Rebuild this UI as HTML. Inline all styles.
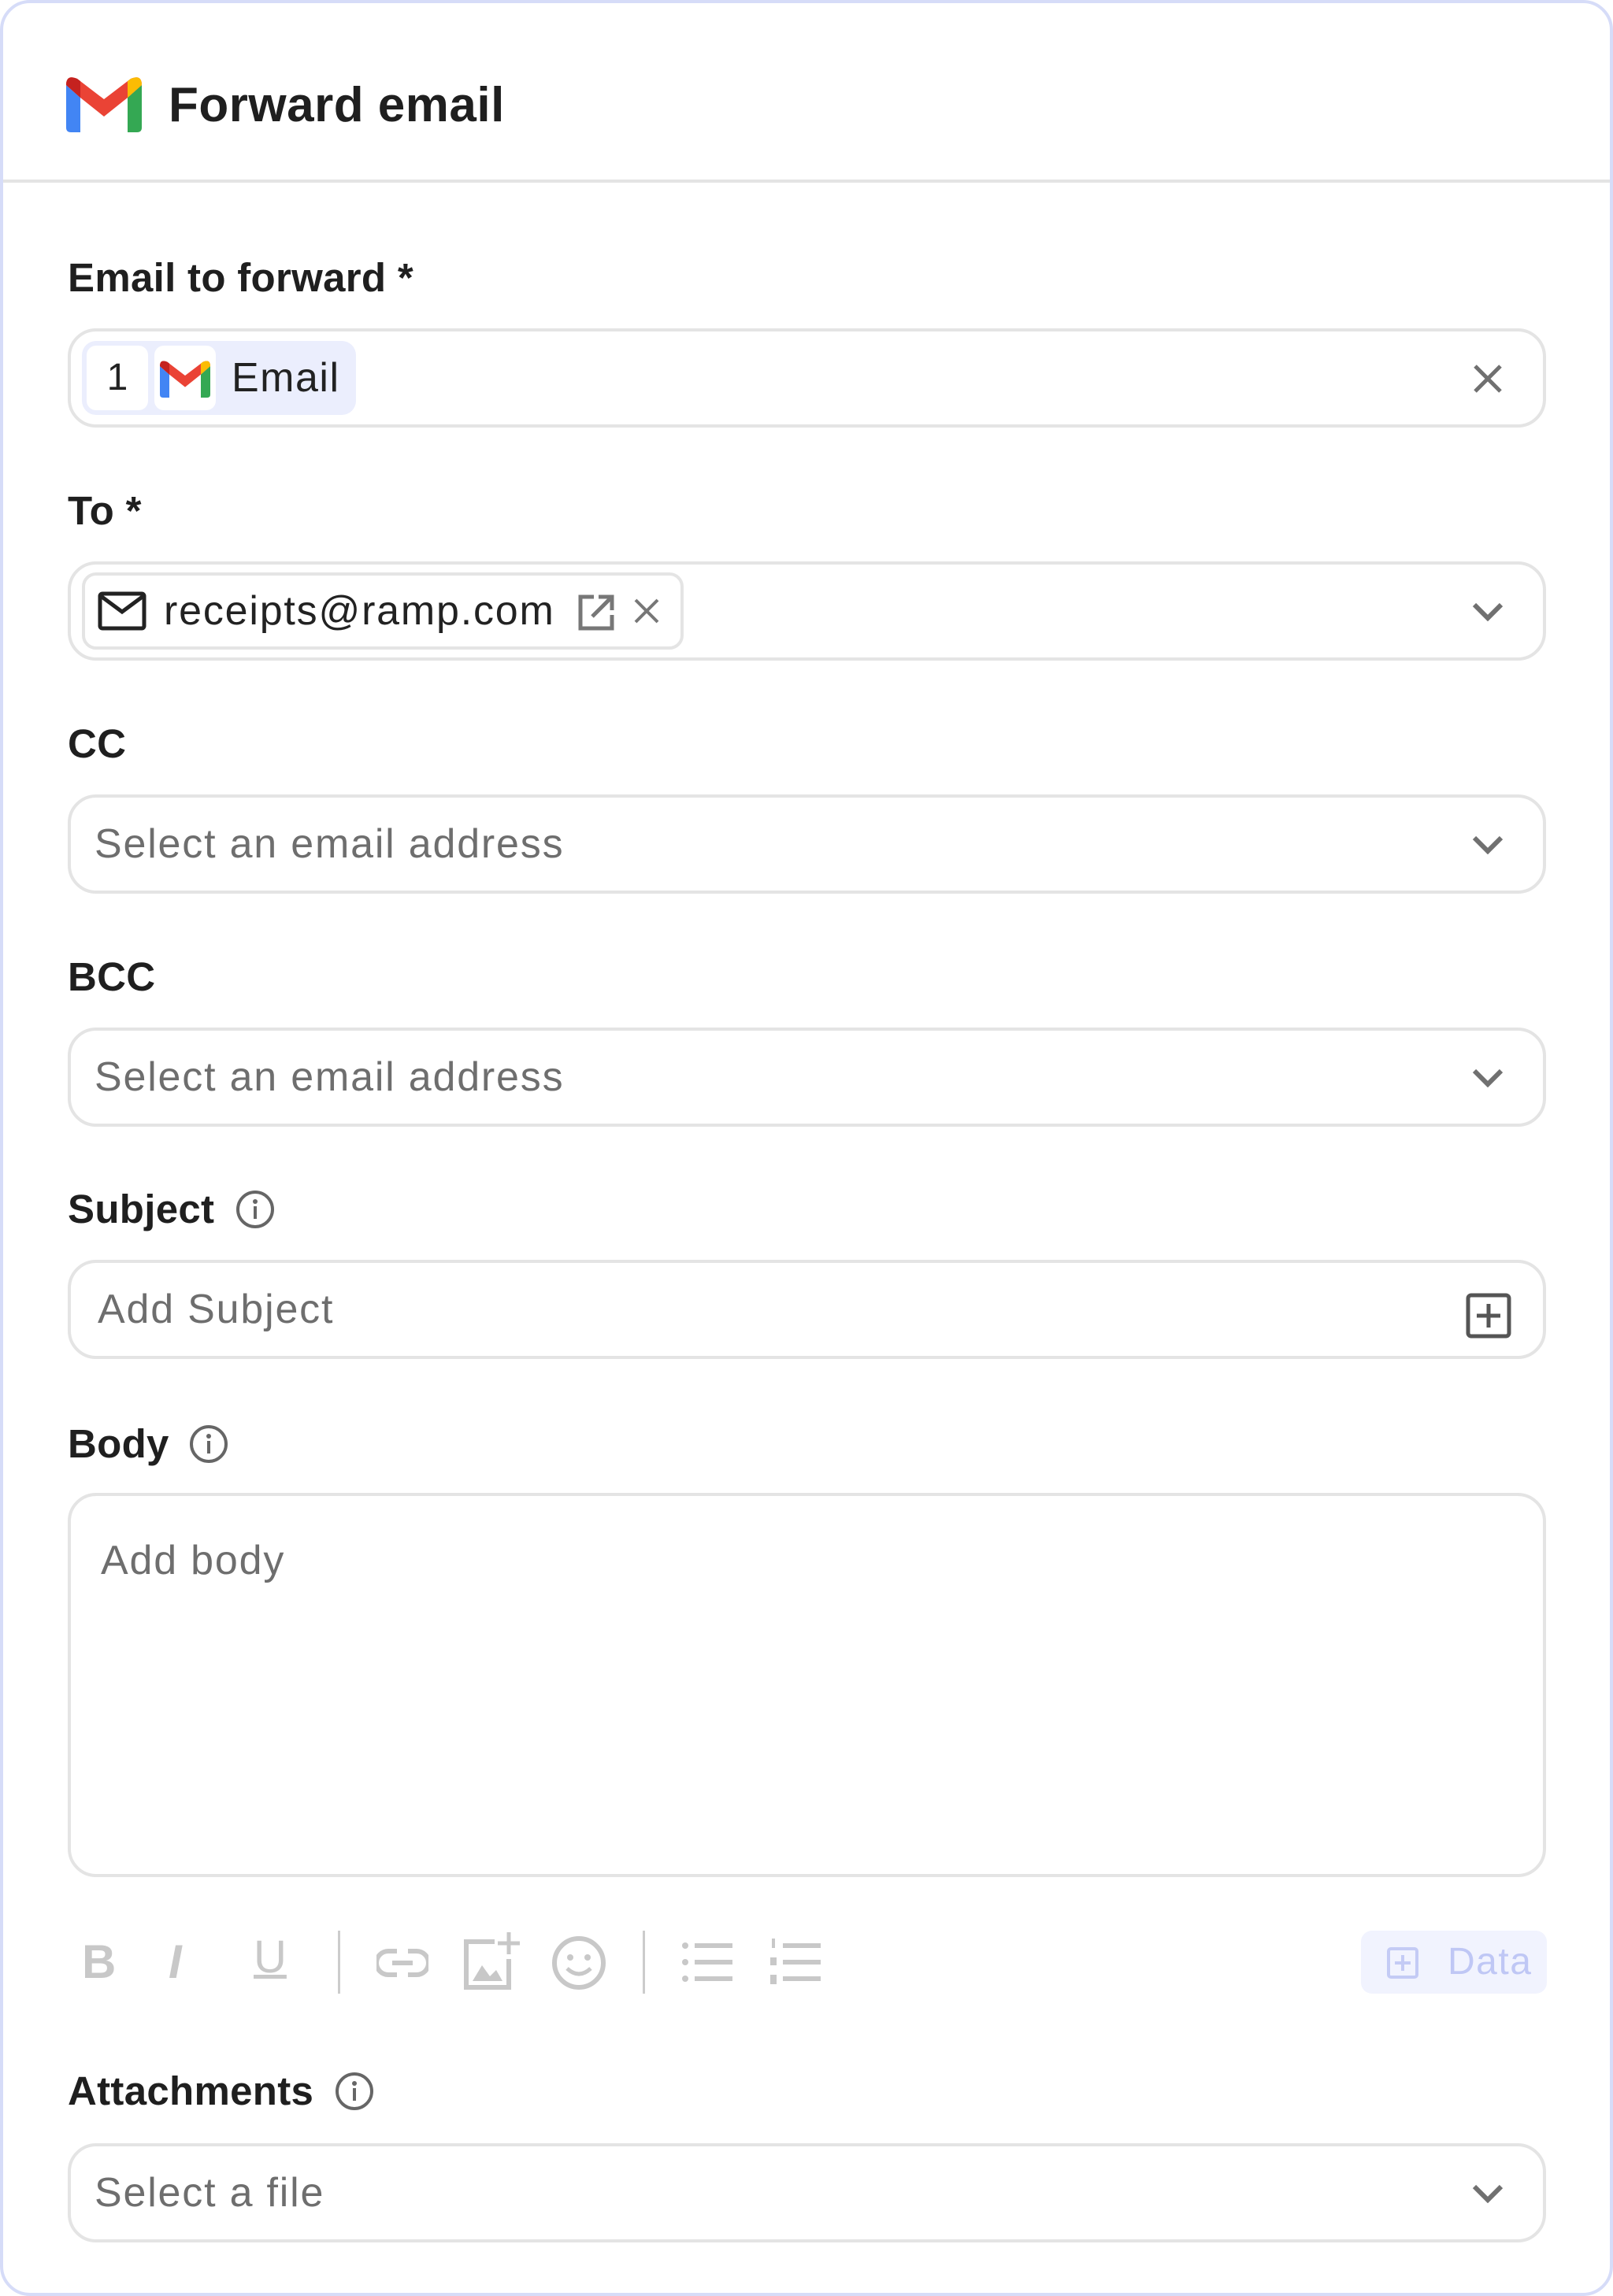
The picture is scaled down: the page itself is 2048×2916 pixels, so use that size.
<!DOCTYPE html>
<html><head><meta charset="utf-8"><style>
*{box-sizing:border-box;margin:0;padding:0}
body{width:2048px;height:2916px;background:#fff;font-family:"Liberation Sans",sans-serif;position:relative;overflow:hidden}
.card{position:absolute;left:0;top:0;width:2048px;height:2916px;border:4px solid #d6dcf8;border-radius:38px}
.hdr{position:absolute;left:4px;right:4px;top:228px;height:4px;background:#e4e4e4}
.title{position:absolute;left:214px;top:98px;font-size:62px;color:#1f1f1f;line-height:72px;font-weight:bold;letter-spacing:0.5px}
.lbl{position:absolute;left:86px;font-size:51px;color:#1f1f1f;line-height:60px;display:flex;align-items:center;font-weight:bold;letter-spacing:0.3px}
.inp{position:absolute;left:86px;width:1877px;height:126px;border:4px solid #e4e4e4;border-radius:36px}
.ph{position:absolute;left:30px;top:0;line-height:118px;font-size:52px;color:#6e6e6e;letter-spacing:1.8px}
.ico{position:absolute;right:50px;top:40px}
</style></head><body>
<div class="card"></div>
<svg style="position:absolute;left:84px;top:96px" width="96" height="72" viewBox="0 0 96 72">
<path d="M0 12 L0 66 Q0 72 6 72 L18 72 L18 28Z" fill="#4285f4"/>
<path d="M78 28 L78 72 L90 72 Q96 72 96 66 L96 12Z" fill="#34a853"/>
<path d="M0 12 Q0 -2 14 4 L48 30 L82 4 Q96 -2 96 12 L78 28 L48 52 L18 28Z" fill="#ea4335"/>
<path d="M0 12 Q0 -2 14 4 L18 7 L18 28Z" fill="#c5221f"/>
<path d="M78 7 L82 4 Q96 -2 96 12 L78 28Z" fill="#fbbc04"/>
</svg>
<div class="title">Forward email</div>
<div class="hdr"></div>

<div class="lbl" style="top:323px">Email to forward *</div>
<div class="inp" style="top:417px">
 <div style="position:absolute;left:14px;top:12px;width:348px;height:94px;background:#ebeefd;border-radius:18px"></div>
 <div style="position:absolute;left:20px;top:18px;width:78px;height:82px;background:#fff;border-radius:12px;font-size:48px;text-align:center;line-height:82px;color:#222">1</div>
 <div style="position:absolute;left:106px;top:18px;width:78px;height:82px;background:#fff;border-radius:12px"></div>
 <svg style="position:absolute;left:112px;top:36px" width="66" height="48" viewBox="0 0 96 72">
<path d="M0 12 L0 66 Q0 72 6 72 L18 72 L18 28Z" fill="#4285f4"/>
<path d="M78 28 L78 72 L90 72 Q96 72 96 66 L96 12Z" fill="#34a853"/>
<path d="M0 12 Q0 -2 14 4 L48 30 L82 4 Q96 -2 96 12 L78 28 L48 52 L18 28Z" fill="#ea4335"/>
<path d="M0 12 Q0 -2 14 4 L18 7 L18 28Z" fill="#c5221f"/>
<path d="M78 7 L82 4 Q96 -2 96 12 L78 28Z" fill="#fbbc04"/>
 </svg>
 <div style="position:absolute;left:204px;top:0;line-height:118px;font-size:52px;color:#222;letter-spacing:1.5px">Email</div>
 <svg class="ico" style="right:51px;top:41px" width="38" height="38" viewBox="0 0 38 38"><path d="M3 3L35 35M35 3L3 35" stroke="#707070" stroke-width="5"/></svg>
</div>

<div class="lbl" style="top:619px">To *</div>
<div class="inp" style="top:713px">
 <div style="position:absolute;left:14px;top:10px;width:764px;height:98px;border:4px solid #e4e4e4;border-radius:18px"></div>
 <svg style="position:absolute;left:34px;top:34px" width="62" height="50" viewBox="0 0 62 50"><rect x="3" y="3" width="56" height="44" rx="3" fill="none" stroke="#222" stroke-width="5"/><path d="M4 6L31 26L58 6" fill="none" stroke="#222" stroke-width="5"/></svg>
 <div style="position:absolute;left:118px;top:0;line-height:118px;font-size:52px;color:#222;letter-spacing:1.8px">receipts@ramp.com</div>
 <svg style="position:absolute;left:644px;top:38px" width="46" height="46" viewBox="0 0 46 46"><path d="M20 3H3V43H43V26" fill="none" stroke="#777" stroke-width="5"/><path d="M26 3H43V20M43 3L18 28" fill="none" stroke="#777" stroke-width="5"/></svg>
 <svg style="position:absolute;left:714px;top:42px" width="34" height="34" viewBox="0 0 34 34"><path d="M3 3L31 31M31 3L3 31" stroke="#777" stroke-width="4"/></svg>
 <svg class="ico" style="right:50px;top:48px" width="40" height="24" viewBox="0 0 40 24"><path d="M3 3L20 20L37 3" fill="none" stroke="#707070" stroke-width="6"/></svg>
</div>

<div class="lbl" style="top:915px">CC</div>
<div class="inp" style="top:1009px"><div class="ph">Select an email address</div>
<svg class="ico" style="right:50px;top:48px" width="40" height="24" viewBox="0 0 40 24"><path d="M3 3L20 20L37 3" fill="none" stroke="#707070" stroke-width="6"/></svg></div>

<div class="lbl" style="top:1211px">BCC</div>
<div class="inp" style="top:1305px"><div class="ph">Select an email address</div>
<svg class="ico" style="right:50px;top:48px" width="40" height="24" viewBox="0 0 40 24"><path d="M3 3L20 20L37 3" fill="none" stroke="#707070" stroke-width="6"/></svg></div>

<div class="lbl" style="top:1506px">Subject<svg style="margin-left:26px" width="52" height="52" viewBox="0 0 52 52"><circle cx="26" cy="26" r="22" fill="none" stroke="#666" stroke-width="4"/><circle cx="26" cy="16" r="3" fill="#666"/><path d="M26 22V38" stroke="#666" stroke-width="4"/></svg></div>
<div class="inp" style="top:1600px"><div class="ph" style="left:34px">Add Subject</div>
<svg class="ico" style="right:40px;top:38px" width="58" height="58" viewBox="0 0 58 58"><rect x="3" y="3" width="52" height="52" rx="4" fill="none" stroke="#555" stroke-width="5"/><path d="M29 14V44M14 29H44" stroke="#555" stroke-width="5"/></svg></div>

<div class="lbl" style="top:1804px">Body<svg style="margin-left:24px" width="52" height="52" viewBox="0 0 52 52"><circle cx="26" cy="26" r="22" fill="none" stroke="#666" stroke-width="4"/><circle cx="26" cy="16" r="3" fill="#666"/><path d="M26 22V38" stroke="#666" stroke-width="4"/></svg></div>
<div class="inp" style="top:1896px;height:488px"><div class="ph" style="left:38px;top:24px;line-height:116px">Add body</div></div>

<div style="position:absolute;left:104px;top:2462px;font-size:60px;font-weight:bold;color:#c8c8c8;line-height:60px">B</div>
<div style="position:absolute;left:214px;top:2462px;font-size:60px;font-weight:bold;font-style:italic;color:#c8c8c8;line-height:60px">I</div>
<div style="position:absolute;left:322px;top:2456px;font-size:58px;color:#c8c8c8;line-height:60px;text-decoration:underline;text-decoration-thickness:5px">U</div>
<div style="position:absolute;left:429px;top:2452px;width:3px;height:80px;background:#ccc"></div>
<svg style="position:absolute;left:478px;top:2474px" width="66" height="38" viewBox="0 0 66 38"><path d="M26 4H15a15 15 0 0 0 0 30H26M40 4H51a15 15 0 0 1 0 30H40M20 19H46" fill="none" stroke="#c8c8c8" stroke-width="6"/></svg>
<svg style="position:absolute;left:588px;top:2452px" width="74" height="76" viewBox="0 0 74 76"><path d="M40 14H4V72H58V36" fill="none" stroke="#c8c8c8" stroke-width="6"/><path d="M58 2V30M44 16H72" stroke="#c8c8c8" stroke-width="5"/><path d="M12 64L24 44L34 58L42 50L50 64Z" fill="#c8c8c8"/></svg>
<svg style="position:absolute;left:700px;top:2458px" width="70" height="70" viewBox="0 0 70 70"><circle cx="35" cy="35" r="31" fill="none" stroke="#c8c8c8" stroke-width="6"/><circle cx="24" cy="28" r="4" fill="#c8c8c8"/><circle cx="46" cy="28" r="4" fill="#c8c8c8"/><path d="M20 42Q35 56 50 42" fill="none" stroke="#c8c8c8" stroke-width="5"/></svg>
<div style="position:absolute;left:816px;top:2452px;width:3px;height:80px;background:#ccc"></div>
<svg style="position:absolute;left:866px;top:2466px" width="66" height="52" viewBox="0 0 66 52"><g fill="#c8c8c8"><circle cx="4" cy="5" r="4"/><circle cx="4" cy="26" r="4"/><circle cx="4" cy="47" r="4"/><rect x="16" y="2" width="48" height="6"/><rect x="16" y="23" width="48" height="6"/><rect x="16" y="44" width="48" height="6"/></g></svg>
<svg style="position:absolute;left:978px;top:2462px" width="66" height="58" viewBox="0 0 66 58"><g fill="#c8c8c8"><rect x="2" y="0" width="4" height="12"/><rect x="0" y="24" width="8" height="10"/><rect x="0" y="46" width="8" height="12"/><rect x="16" y="6" width="48" height="6"/><rect x="16" y="27" width="48" height="6"/><rect x="16" y="48" width="48" height="6"/></g></svg>
<div style="position:absolute;left:1728px;top:2452px;width:236px;height:80px;background:#f1f3fe;border-radius:14px"></div>
<svg style="position:absolute;left:1760px;top:2472px" width="42" height="42" viewBox="0 0 42 42"><rect x="3" y="3" width="36" height="36" rx="3" fill="none" stroke="#c4cbf5" stroke-width="4"/><path d="M21 11V31M11 21H31" stroke="#c4cbf5" stroke-width="4"/></svg>
<div style="position:absolute;left:1838px;top:2462px;font-size:48px;color:#bfc7f5;line-height:60px;letter-spacing:1.5px">Data</div>

<div class="lbl" style="top:2626px">Attachments<svg style="margin-left:26px" width="52" height="52" viewBox="0 0 52 52"><circle cx="26" cy="26" r="22" fill="none" stroke="#666" stroke-width="4"/><circle cx="26" cy="16" r="3" fill="#666"/><path d="M26 22V38" stroke="#666" stroke-width="4"/></svg></div>
<div class="inp" style="top:2722px"><div class="ph">Select a file</div>
<svg class="ico" style="right:50px;top:48px" width="40" height="24" viewBox="0 0 40 24"><path d="M3 3L20 20L37 3" fill="none" stroke="#707070" stroke-width="6"/></svg></div>
</body></html>
